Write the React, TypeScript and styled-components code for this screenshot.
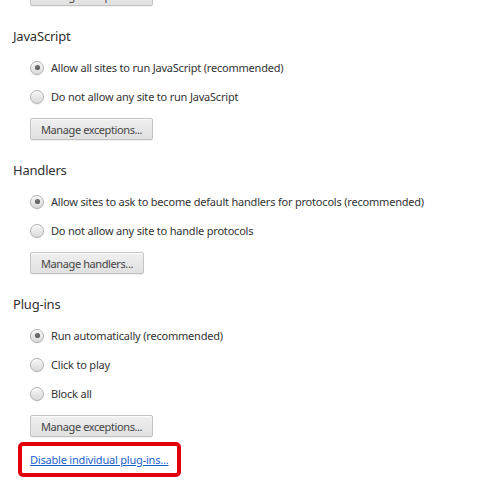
import React from "react";
import styled, { createGlobalStyle } from "styled-components";

const Global = createGlobalStyle`
  body {
    margin: 0;
    background: #fff;
    font-family: "Noto Sans", "Open Sans", sans-serif;
    color: #333;
  }
`;

type Option = { label: string; checked?: boolean };
type SectionData = { title: string; options: Option[]; button: string };

const sections: SectionData[] = [
  {
    title: "JavaScript",
    options: [
      { label: "Allow all sites to run JavaScript (recommended)", checked: true },
      { label: "Do not allow any site to run JavaScript" },
    ],
    button: "Manage exceptions...",
  },
  {
    title: "Handlers",
    options: [
      {
        label: "Allow sites to ask to become default handlers for protocols (recommended)",
        checked: true,
      },
      { label: "Do not allow any site to handle protocols" },
    ],
    button: "Manage handlers...",
  },
  {
    title: "Plug-ins",
    options: [
      { label: "Run automatically (recommended)", checked: true },
      { label: "Click to play" },
      { label: "Block all" },
    ],
    button: "Manage exceptions...",
  },
];

const Page = styled.div`
  width: 500px;
  height: 500px;
  overflow: hidden;
  display: flex;
  flex-direction: column;
`;

const CutOff = styled.div`
  display: flex;
  margin-top: -16px;
  padding-left: 30px;
`;

const Section = styled.section`
  display: flex;
  flex-direction: column;
  padding-top: 20px;
`;

const Heading = styled.h3`
  margin: 0;
  padding-left: 13px;
  height: 20px;
  line-height: 20px;
  font-size: 13px;
  font-weight: 400;
  letter-spacing: -0.2px;
  color: #303030;
`;

const Options = styled.div`
  display: flex;
  flex-direction: column;
  margin-top: 7px;
`;

const Row = styled.label`
  display: flex;
  align-items: center;
  gap: 7px;
  height: 29px;
  padding-left: 30px;
  font-size: 11px;
  letter-spacing: -0.2px;
  color: #333;
`;

const Radio = styled.span<{ $checked?: boolean }>`
  position: relative;
  width: 14px;
  height: 14px;
  box-sizing: border-box;
  border-radius: 50%;
  border: 1px solid #b0b0b0;
  background: linear-gradient(#f6f6f6, #dadada);
  box-shadow: inset 0 1px 1px rgba(255, 255, 255, 0.9), 0 1px 0 rgba(0, 0, 0, 0.05);
  flex: none;

  &::after {
    content: "";
    display: ${(p) => (p.$checked ? "block" : "none")};
    position: absolute;
    left: 3.5px;
    top: 3.5px;
    width: 5px;
    height: 5px;
    border-radius: 50%;
    background: radial-gradient(circle at 50% 40%, #7a7a7a, #454545);
  }
`;

const ButtonWrap = styled.div`
  display: flex;
  padding-left: 30px;
  margin-top: 7px;
`;

const Button = styled.button`
  display: block;
  height: 22px;
  padding: 0 10px;
  box-sizing: border-box;
  border: 1px solid #c3c3c3;
  border-radius: 2px;
  background: linear-gradient(#f0f0f0, #e0e0e0);
  box-shadow: 0 1px 0 rgba(0, 0, 0, 0.06), inset 0 1px 1px rgba(255, 255, 255, 0.8);
  font-family: "Noto Sans", "Open Sans", sans-serif;
  font-size: 11px;
  letter-spacing: -0.4px;
  color: #444;
`;

const Highlight = styled.div`
  align-self: flex-start;
  margin: 5px 0 0 18px;
  padding: 6px 8px 5px 8px;
  border: 4px solid #e3000e;
  border-radius: 5px;
  font-size: 11px;
  line-height: 16px;
`;

const Link = styled.a`
  display: block;
  font-size: 11px;
  letter-spacing: -0.2px;
  color: #1a5fd0;
  text-decoration: underline;
  line-height: 16px;
`;

export default function App() {
  return (
    <Page>
      <Global />
      <CutOff>
        <Button>Manage exceptions...</Button>
      </CutOff>
      {sections.map((s) => (
        <Section key={s.title}>
          <Heading>{s.title}</Heading>
          <Options>
            {s.options.map((o) => (
              <Row key={o.label}>
                <Radio $checked={o.checked} />
                {o.label}
              </Row>
            ))}
          </Options>
          <ButtonWrap>
            <Button>{s.button}</Button>
          </ButtonWrap>
        </Section>
      ))}
      <Highlight>
        <Link href="#">Disable individual plug-ins...</Link>
      </Highlight>
    </Page>
  );
}
